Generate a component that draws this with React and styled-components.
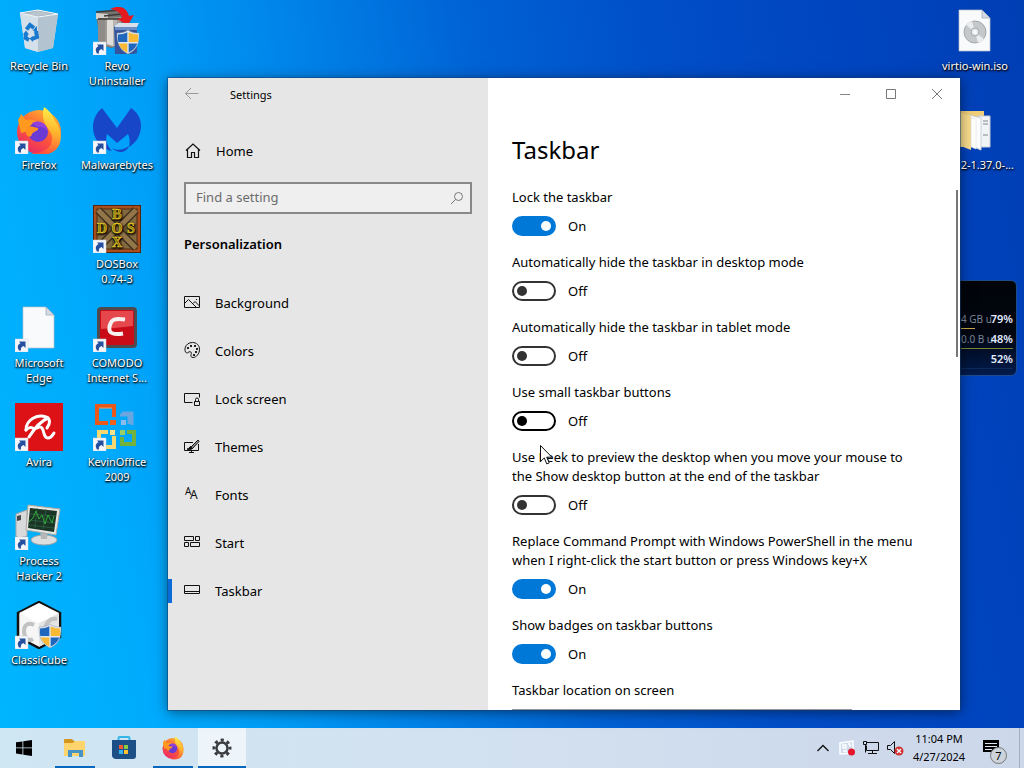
import React, { useState } from "react";
import styled, { createGlobalStyle } from "styled-components";

const NAV_ITEMS = [
  { name: "Background", icon: "background" },
  { name: "Colors", icon: "colors" },
  { name: "Lock screen", icon: "lock" },
  { name: "Themes", icon: "themes" },
  { name: "Fonts", icon: "fonts" },
  { name: "Start", icon: "start" },
  { name: "Taskbar", icon: "taskbar" },
];

const SETTINGS = [
  { id: "lock", label: "Lock the taskbar", on: true },
  { id: "hideDesktop", label: "Automatically hide the taskbar in desktop mode", on: false },
  { id: "hideTablet", label: "Automatically hide the taskbar in tablet mode", on: false },
  { id: "small", label: "Use small taskbar buttons", on: false, hovered: true },
  {
    id: "peek",
    label:
      "Use Peek to preview the desktop when you move your mouse to the Show desktop button at the end of the taskbar",
    on: false,
  },
  {
    id: "powershell",
    label:
      "Replace Command Prompt with Windows PowerShell in the menu when I right-click the start button or press Windows key+X",
    on: true,
  },
  { id: "badges", label: "Show badges on taskbar buttons", on: true },
];

/* ---------- desktop icons ---------- */

const Shortcut = () => (
  <g>
    <rect x="0" y="35" width="13" height="13" fill="#f4f6fa" stroke="#cfd8e4" strokeWidth="0.500" />
    <path d="M4 46.500c-2-3.500-1.500-6 1.500-7.300L4 37.500h6.500V44l-2-2c-2 .7-3 2-2.500 4.500z" fill="#24509f" />
  </g>
);

const Shield = () => (
  <g>
    <path d="M35 23c3 2.500 7 3 11 3 .5 10-2 17-11 21-8-4-11.500-11-11-21 4 0 8-.5 11-3z" fill="#dfe6ee" stroke="#8796a8" strokeWidth="0.500" />
    <path d="M34.300 25.300V35h-9c-.4-2.500-.4-4.700-.3-7.500 3.600 0 6.300-.5 9.300-2.200z" fill="#1f66bd" />
    <path d="M35.700 25.300V35h9c.4-2.500.4-4.700.3-7.500-3.600 0-6.300-.5-9.300-2.200z" fill="#f9b934" />
    <path d="M34.300 45.500v-9h-8.500c1.200 4 4 7 8.500 9z" fill="#f9b934" />
    <path d="M35.700 45.500v-9h8.500c-1.200 4-4 7-8.500 9z" fill="#1f66bd" />
  </g>
);

const RecycleBin = () => (
  <>
    <path d="M5 6l18-3 20 4-5 34-15 4-13-4z" fill="#c6d0d9" />
    <path d="M5 6l18 4 20-3-20-4z" fill="#95a3af" />
    <path d="M9 7l14 2 15-2-15-3z" fill="#b9c5cf" />
    <path d="M5 6l18 4v35l-13-4z" fill="#d3dfe9" />
    <path d="M23 10l20-3-5 34-15 4z" fill="#b4c3d0" />
    <path d="M5 6l18 4 20-3-20-4z" fill="none" stroke="#f2f6f9" strokeWidth="1.200" />
    <g fill="none" stroke="#1979cf" strokeWidth="4">
      <path d="M11.500 22.500l3.500-4.500 4 3" />
      <path d="M21 24l1 6-5 2" />
      <path d="M14 33l-3.500-2 .5-5" />
    </g>
    <path d="M17.500 23.500l4.500-4.500v5.500zM18 29v6l-3.500-3.500zM8 27.500l3-4 3 4z" fill="#1979cf" />
  </>
);

const Revo = () => (
  <>
    <path d="M3 6l18-3 10 2v33l-13 3-11-3z" fill="#777470" />
    <path d="M3 6l12 1v5H3z" fill="#d4d1cc" />
    <path d="M5 11h9v26l-9-3z" fill="#8f8c87" />
    <path d="M12 11l16-1v27l-9 3-7-2z" fill="#9d9a95" />
    <path d="M14 12h6v27l-6-2z" fill="#e0deda" />
    <path d="M20 12h4v27h-4z" fill="#b9b6b1" />
    <path d="M3 5l25-2M11 9l18-2M5 12h24" stroke="#3d3936" strokeWidth="1.300" />
    <path d="M17 2c10-5 17-1 19 7l5-1-6 10-11-6 5-1c-1-5-5-8-12-9z" fill="#e31a1f" />
    <path d="M21 19l4-3h21l-2 4v26l-4 1H22z" fill="#34559b" />
    <path d="M21 19l4-3h21l-2 4H22z" fill="#d6dfea" />
    <path d="M22 20h22v3H22z" fill="#6c8cc4" />
    <Shield />
    <Shortcut />
  </>
);

const FirefoxShapes = () => (
  <>
    <circle cx="24" cy="26" r="22" fill="url(#ffRed)" />
    <path d="M29 1c7 5 9 9 11 14 6 7 8 18 3 26-5 8-17 10-27 6 12 1 22-5 21-16-1-6-4-8-7-13-2-5-3-10-1-17z" fill="url(#ffGold)" />
    <path d="M3 14c1-2 2-3 3-6l5 6c4-1 9 0 11 2l-4 8-12 3z" fill="#ff9a1f" />
    <circle cx="23" cy="26" r="10" fill="#6b39d3" />
    <path d="M11 21c4-1 8 0 12 1 1 3-4 3-6 6-1 4-4 3-6 0z" fill="#ff9120" />
    <path d="M17 17c7-4 15 0 16 9-2-4-6-6-11-5z" fill="#9340dc" />
  </>
);

const FirefoxDesktop = () => (
  <>
    <FirefoxShapes />
    <Shortcut />
  </>
);

const Malwarebytes = () => (
  <>
    <path
      d="M9 2l15 20L38 2c6 4 10 10 10 18 0 9-5 17-12 21 1-5 1-9-1-13l-11 9-10-9c-2 6 0 12 5 17C8 43 0 33 0 21 0 13 4 6 9 2z"
      fill="#1746c8"
    />
    <path d="M19 42c5 3 12 2 17-2-2 6-10 9-17 2z" fill="#1746c8" />
    <Shortcut />
  </>
);

const DosBox = () => (
  <>
    <rect width="48" height="48" fill="#52260d" />
    <rect x="1" y="1" width="46" height="46" fill="#a94f1d" />
    <rect x="4" y="4" width="40" height="40" fill="#82693e" stroke="#4d2b12" />
    <path d="M24 5v38M5 24h38" stroke="#6d5530" strokeWidth="10" />
    <path d="M5 5l38 38M43 5L5 43" stroke="#40311f" strokeWidth="8" />
    <path d="M5 5l38 38M43 5L5 43" stroke="#927548" strokeWidth="5" />
    <g fill="#fbdc27" stroke="#fbdc27" strokeWidth="0.500" fontFamily="Liberation Serif, serif" fontWeight="700" fontSize="14" textAnchor="middle">
      <text x="24" y="14">B</text>
      <text x="9" y="28">D</text>
      <text x="24" y="28">O</text>
      <text x="38" y="28">S</text>
      <text x="24" y="42">X</text>
    </g>
    <Shortcut />
  </>
);

const Page = ({ shortcut }) => (
  <>
    <path d="M8 3h23l8 8v33H8z" fill="#f9fafb" stroke="#b9c2cc" strokeWidth="0.700" />
    <path d="M31 3v8h8z" fill="#d5dbe3" stroke="#9aa7b5" strokeWidth="0.700" />
    {shortcut && <Shortcut />}
  </>
);

const Comodo = () => (
  <>
    <rect x="4" y="3" width="40" height="41" rx="4" fill="#4e4a50" />
    <rect x="7" y="6" width="34" height="35" rx="2" fill="#c90b17" />
    <path d="M8 7h32v15q-16 2-32 3z" fill="#e5474d" />
    <path d="M32 15.500c-7-1-12-1-14 3-2 4-2 7-1 9 2 3 7 3 13 2" fill="none" stroke="#f7f0f0" strokeWidth="4" />
    <Shortcut />
  </>
);

const Avira = () => (
  <>
    <rect width="48" height="48" fill="#dc1216" />
    <g fill="none" stroke="#fff" strokeWidth="3" strokeLinecap="round" strokeLinejoin="round">
      <path d="M11 27C11 16 23 11 31 14c5 2 4 7 1 11" />
      <path d="M33 15C26 18 19 26 14 34" />
      <path d="M11 27c3-3 6-3 8-1M22 25c3-2 5-1 6 2 1 4 2 8 5 8s4-2 6-5" />
    </g>
    <Shortcut />
  </>
);

const Office = () => (
  <>
    <g fill="none">
      <path d="M15 20H4V3h17v11" stroke="#e8581b" strokeWidth="4" />
      <path d="M6 5h13" stroke="#f59b62" />
      <rect x="17" y="17" width="6" height="5" fill="#f0601f" />
      <path d="M27 12h9v9M29 10h10v12" stroke="#6aa6e0" strokeWidth="3" />
      <rect x="28" y="17" width="5" height="5" fill="#8abdec" />
      <path d="M6 35v-6h9M21 33v11H9" stroke="#f3d873" strokeWidth="4" />
      <rect x="17" y="27" width="5" height="5" fill="#f8e28b" />
      <path d="M34 29h7v12H29v-7" stroke="#73b13d" strokeWidth="4" />
      <rect x="27" y="27" width="5" height="5" fill="#9bcf63" />
    </g>
    <Shortcut />
  </>
);

const ProcessHacker = () => (
  <>
    <path d="M1 12l11-4v26l-8 2-3-2z" fill="#d9dadb" stroke="#a4a6a9" />
    <path d="M2 14l4-1v5l-4 1z" fill="#46494c" />
    <ellipse cx="29" cy="38" rx="13" ry="5" fill="#dddfdf" stroke="#9fa2a5" />
    <path d="M25 28h8l-1 9h-6z" fill="#b5b7b9" />
    <path d="M13 3l32 4-4 26-30-5z" fill="#e6e6e2" stroke="#a7a8a3" />
    <path d="M15 6l27 3-3 21-26-4z" fill="#1a3425" />
    <path d="M15 12l26 2M14 18l26 3M14 23l25 3M22 6l-2 20M31 7l-3 20" stroke="#356946" strokeWidth="0.700" />
    <path d="M14 20l4-4 3-7 3 8 3-4 3 9 3-9 4 8 2-7" fill="none" stroke="#2fa83a" />
    <Shortcut />
  </>
);

const ClassiCube = () => (
  <>
    <path d="M24 1l21 11v24L24 47 3 36V12z" fill="#f6f6f6" stroke="#111" strokeWidth="2.500" />
    <path d="M24 22v24l20-11V12z" fill="#e4e4e4" />
    <path d="M4 12l20 10 20-10L24 2z" fill="#fff" />
    <g fill="none" stroke="#c2c2c2" strokeWidth="4">
      <path d="M19 24c-6-3-10 0-10 6s4 11 9 8" />
      <path d="M42 18c-7-1-12 4-12 12" />
    </g>
    <Shield />
    <Shortcut />
  </>
);

const Iso = () => (
  <>
    <Page />
    <circle cx="24" cy="25" r="11" fill="#c5c8ca" stroke="#a4a8ab" />
    <path d="M24 25L15 18a11 11 0 0 1 6-4zM24 25l9 7a11 11 0 0 1-6 4z" fill="#e9ebec" />
    <circle cx="24" cy="25" r="4" fill="#e7e9ea" stroke="#a4a8ab" />
    <circle cx="24" cy="25" r="1.500" fill="#fff" />
  </>
);

const OpenFolder = () => (
  <>
    <path d="M2 5h31v36H2z" fill="#f0cd78" />
    <path d="M27 10h12v31H27z" fill="#f1f4f6" stroke="#c6cbd0" />
    <path d="M32 15h5M32 18h5M32 29h5" stroke="#7f8890" />
    <path d="M18 9l12 3v32l-12-5z" fill="#fcfdfd" stroke="#ccd2d8" />
    <path d="M2 5l18 5v34L2 37z" fill="#f8dc8c" />
    <path d="M20 12l5 1v30l-5-2z" fill="#fff" stroke="#d5d9dd" strokeWidth="0.500" />
  </>
);

/* slot is the row and column on the desktop grid */
const LEFT_ICONS = [
  { name: "Recycle Bin", Art: RecycleBin, slot: "1 / 1" },
  { name: "Revo\nUninstaller", Art: Revo, slot: "1 / 2" },
  { name: "Firefox", Art: FirefoxDesktop, slot: "2 / 1" },
  { name: "Malwarebytes", Art: Malwarebytes, slot: "2 / 2" },
  { name: "DOSBox\n0.74-3", Art: DosBox, slot: "3 / 2" },
  { name: "Microsoft\nEdge", Art: () => <Page shortcut />, slot: "4 / 1" },
  { name: "COMODO\nInternet S...", Art: Comodo, slot: "4 / 2" },
  { name: "Avira", Art: Avira, slot: "5 / 1" },
  { name: "KevinOffice\n2009", Art: Office, slot: "5 / 2" },
  { name: "Process\nHacker 2", Art: ProcessHacker, slot: "6 / 1" },
  { name: "ClassiCube", Art: ClassiCube, slot: "7 / 1" },
];

const RIGHT_ICONS = [
  { name: "virtio-win.iso", Art: Iso, slot: "1 / 1" },
  { name: "2-1.37.0-...", Art: OpenFolder, slot: "2 / 1", end: true },
];

/* ---------- settings icons ---------- */

const NAV_ART = {
  background: (
    <>
      <path d="M.5 1.500h15v11H.5z" />
      <path d="M.5 8.500l4-4 8 8M9 8.500l2-2 4.500 4.500" />
      <path d="M12 4.500h1" />
    </>
  ),
  colors: (
    <>
      <path d="M8.500-.5c4 0 7 2.800 7 6.800 0 4.600-3.400 8.200-6.400 8.200-2 0-2.600-1.400-2-3 .5-1.500.2-2.700-1-2.800-1.700-.2-2.200 1.800-3.600 1.200C-.5 8.500.5-.5 8.500-.5z" />
      <g fill="#222" stroke="none">
        <rect x="3" y="4" width="2" height="2" />
        <rect x="6" y="2" width="2" height="2" />
        <rect x="10" y="2" width="2" height="2" />
        <rect x="12" y="5" width="2" height="2" />
        <rect x="11" y="8" width="2" height="2" />
        <rect x="9" y="11" width="2" height="2" />
      </g>
    </>
  ),
  lock: (
    <>
      <path d="M8.500 11.500h-8v-9h15v4" />
      <path d="M10.500 10.500h5v4h-5zM11.500 10.500v-2q0-1.500 1.500-1.500t1.500 1.500v2" />
    </>
  ),
  themes: (
    <>
      <path d="M9 3.500H.5v8h14V5M7.500 11.500v2M5 13.500h5" />
      <path d="M14 1L8 7l-1 1.500L8.500 9.500l6.500-7z" fill="#999" />
      <path d="M7 7.500c-2 0-1.500 2.500-4 2.500 2 1 5 .8 5.500-1" fill="#111" />
    </>
  ),
  fonts: (
    <g fill="#111" stroke="none" fontFamily="Noto Sans, sans-serif">
      <text x="1" y="8" fontSize="10">A</text>
      <text x="6" y="12" fontSize="12">A</text>
    </g>
  ),
  start: <path d="M.5 1.500h9v4h-9zM11.500 1.500h4v4h-4zM.5 7.500h4v4h-4zM6.500 7.500h9v4h-9z" />,
  taskbar: <path d="M.5 2.500h15v8H.5zM.5 8.500h15" />,
};

const NavIcon = ({ name }) => (
  <svg width="16" height="16" viewBox="0 0 16 16" fill="none" stroke="#111" overflow="visible">
    {NAV_ART[name]}
  </svg>
);

/* ---------- parts ---------- */

const ToggleSetting = ({ setting }) => {
  const [on, setOn] = useState(setting.on);

  return (
    <StSetting>
      <StSettingLabel htmlFor={setting.id}>{setting.label}</StSettingLabel>
      <StToggleRow>
        <StToggle
          id={setting.id}
          type="checkbox"
          role="switch"
          checked={on}
          $hovered={setting.hovered}
          onChange={(event) => setOn(event.target.checked)}
        />
        <span>{on ? "On" : "Off"}</span>
      </StToggleRow>
    </StSetting>
  );
};

const DesktopIcons = ({ icons, columns }) => (
  <StIconGrid $columns={columns}>
    {icons.map(({ name, Art, slot, end }) => (
      <StDesktopIcon key={name} $slot={slot} $end={end}>
        <svg width="48" height="48" viewBox="0 0 48 48">
          <Art />
        </svg>
        <span>{name}</span>
      </StDesktopIcon>
    ))}
  </StIconGrid>
);

const SettingsWindow = () => {
  const [page, setPage] = useState("Taskbar");

  return (
    <StWindow>
      <StSidebar>
        <StTitleBar>
          <StBackButton aria-label="Back">
            <svg width="14" height="14" viewBox="0 0 14 14" fill="none" stroke="#999">
              <path d="M.5 6.500h13M6 1L.5 6.500 6 12" />
            </svg>
          </StBackButton>
          <span>Settings</span>
        </StTitleBar>
        <StHome>
          <svg width="16" height="16" viewBox="0 0 16 16" fill="none" stroke="#111" strokeWidth="1.200">
            <path d="M1 7.500L8 1l7 6.500M2.500 6.500v8h4v-5h3v5h4v-8" />
          </svg>
          Home
        </StHome>
        <StSearch>
          <input type="text" placeholder="Find a setting" aria-label="Find a setting" />
          <svg width="14" height="14" viewBox="0 0 14 14" fill="none" stroke="#777">
            <circle cx="8.500" cy="5.500" r="4" />
            <path d="M5.500 8.500L1 13" />
          </svg>
        </StSearch>
        <StGroupTitle>Personalization</StGroupTitle>
        <StNav>
          {NAV_ITEMS.map((item) => (
            <StNavItem key={item.name} $active={item.name === page} onClick={() => setPage(item.name)}>
              <NavIcon name={item.icon} />
              {item.name}
            </StNavItem>
          ))}
        </StNav>
      </StSidebar>

      <StMain>
        <StWindowButtons>
          <button aria-label="Minimize">
            <svg width="12" height="12" viewBox="0 0 12 12" stroke="#858585">
              <path d="M1 6.500h10" />
            </svg>
          </button>
          <button aria-label="Maximize">
            <svg width="12" height="12" viewBox="0 0 12 12" fill="none" stroke="#777">
              <path d="M1.500 1.500h9v9h-9z" />
            </svg>
          </button>
          <button aria-label="Close">
            <svg width="12" height="12" viewBox="0 0 12 12" stroke="#777">
              <path d="M1 1l10 10M11 1L1 11" />
            </svg>
          </button>
        </StWindowButtons>
        <StHeading>Taskbar</StHeading>
        <StScrollArea>
          <StSettingList>
            {SETTINGS.map((setting) => (
              <ToggleSetting key={setting.id} setting={setting} />
            ))}
            <StSetting>
              <StSettingLabel htmlFor="location">Taskbar location on screen</StSettingLabel>
              <StSelect id="location" defaultValue="Bottom">
                <option>Left</option>
                <option>Top</option>
                <option>Right</option>
                <option>Bottom</option>
              </StSelect>
            </StSetting>
          </StSettingList>
          <StScrollThumb />
        </StScrollArea>
      </StMain>
    </StWindow>
  );
};

const Taskbar = () => (
  <StTaskbar>
    <StTaskButtons>
      <StTaskButton aria-label="Start">
        <svg width="16" height="16" viewBox="0 0 16 16" fill="#000">
          <path d="M0 2.300l6.500-.9v6.100H0zM7.300 1.300L16 0v7.500H7.300zM0 8.300h6.500v6.200L0 13.600zM7.300 8.300H16V16l-8.700-1.300z" />
        </svg>
      </StTaskButton>
      <StTaskButton aria-label="File Explorer" $open>
        <svg width="22" height="20" viewBox="0 0 22 20">
          <path d="M0 2q0-1 1-1h7l2 2h9v14H0z" fill="#d3971f" />
          <path d="M0 5h9l2-2h9q1 0 1 1v14H0z" fill="#fdd56c" />
          <path d="M4 19v-7h15v7h-4v-4H8v4z" fill="#4693c8" />
        </svg>
      </StTaskButton>
      <StTaskButton aria-label="Microsoft Store">
        <svg width="24" height="24" viewBox="0 0 24 24">
          <path d="M6.500 5V2q0-1 1-1h9q1 0 1 1v3" fill="none" stroke="#35b6e8" strokeWidth="2" />
          <path d="M0 4h24v16q0 3-3 3H4q-3 0-4-3z" fill="#1b4f86" />
          <path d="M7 9h4v4H7z" fill="#f05a35" />
          <path d="M12 9h4v4h-4z" fill="#8ccb3f" />
          <path d="M7 14h4v4H7z" fill="#35b3ec" />
          <path d="M12 14h4v4h-4z" fill="#fcc132" />
        </svg>
      </StTaskButton>
      <StTaskButton aria-label="Firefox" $open>
        <svg width="24" height="24" viewBox="0 0 48 50">
          <FirefoxShapes />
        </svg>
      </StTaskButton>
      <StTaskButton aria-label="Settings" $open $active>
        <svg width="20" height="20" viewBox="0 0 20 20" fill="none" stroke="#3a3d40">
          <circle cx="10" cy="10" r="5.500" strokeWidth="2.500" />
          <circle cx="10" cy="10" r="8" strokeWidth="3" strokeDasharray="3.140 3.140" strokeDashoffset="1.570" />
        </svg>
      </StTaskButton>
    </StTaskButtons>

    <StTray>
      <StTrayButton aria-label="Show hidden icons">
        <svg width="14" height="14" viewBox="0 0 14 14" fill="none" stroke="#111" strokeWidth="1.300">
          <path d="M1.500 10L7 4.500l5.500 5.500" />
        </svg>
      </StTrayButton>
      <StTrayButton aria-label="Comodo">
        <svg width="18" height="18" viewBox="0 0 18 18" fill="none" stroke="#fff" strokeWidth="1.500">
          <path d="M2 4l13-2v12L2 15zM5 6h3v3H5zM10 5h2v3M5 12h4" />
          <circle cx="13.500" cy="13" r="3.500" fill="#e2152c" stroke="none" />
        </svg>
      </StTrayButton>
      <StTrayButton aria-label="Network">
        <svg width="18" height="18" viewBox="0 0 18 18" fill="none" stroke="#111">
          <path d="M5 3.500h11.500v8h-12v-5M10.500 11.500v3M6 14.500h9" />
          <path d="M1.500 2.500h3v3h-3zM3.500 6v7.500" />
        </svg>
      </StTrayButton>
      <StTrayButton aria-label="Volume muted">
        <svg width="18" height="18" viewBox="0 0 18 18" fill="none" stroke="#111">
          <path d="M1.500 6.500h3l4-4v12l-4-4h-3z" />
          <circle cx="13" cy="12" r="4.500" fill="#d23434" stroke="none" />
          <path d="M11 10l4 4M15 10l-4 4" stroke="#fff" strokeWidth="1.300" />
        </svg>
      </StTrayButton>
      <StClock>
        <span>11:04 PM</span>
        <span>4/27/2024</span>
      </StClock>
      <StNotifications aria-label="7 notifications">
        <svg width="17" height="17" viewBox="0 0 17 17">
          <path d="M0 0h16v12h-4v4l-4-4H0z" fill="#000" />
          <path d="M2 3.500h12M2 6.500h12M2 9.500h7" stroke="#dfe6f2" />
        </svg>
        <StBadge>7</StBadge>
      </StNotifications>
      <StShowDesktop aria-label="Show desktop" />
    </StTray>
  </StTaskbar>
);

const App = () => {
  return (
    <StScreen>
      <GlobalStyle />
      <StGradients aria-hidden="true">
        <linearGradient id="ffRed" x1="0.800" y1="0" x2="0.200" y2="1">
          <stop offset="0" stopColor="#ffbd2e" />
          <stop offset="0.500" stopColor="#ff5a36" />
          <stop offset="1" stopColor="#e8246b" />
        </linearGradient>
        <linearGradient id="ffGold" x1="0.600" y1="0" x2="0.400" y2="1">
          <stop offset="0" stopColor="#fff14a" />
          <stop offset="0.500" stopColor="#ffb02c" />
          <stop offset="1" stopColor="#ff4b3e" />
        </linearGradient>
      </StGradients>
      <StDesktop>
        <DesktopIcons icons={LEFT_ICONS} columns={2} />
        <DesktopIcons icons={RIGHT_ICONS} columns={1} />
        <StGadget>
          <StGadgetRow $line="#c9a54a" $used="14px">
            <span>4 GB u</span>
            <strong>79%</strong>
          </StGadgetRow>
          <StGadgetRow $line="#7c842c" $used="56px">
            <span>0.0 B u</span>
            <strong>48%</strong>
          </StGadgetRow>
          <StGadgetRow $line="#0b2a5a" $used="56px">
            <strong>52%</strong>
          </StGadgetRow>
        </StGadget>
        <SettingsWindow />
        <StCursor width="13" height="20" viewBox="0 0 13 20">
          <path d="M.5.500v16l3.800-3.600 2.400 6 2.500-1-2.500-5.700h5.200z" fill="#fff" stroke="#111" />
        </StCursor>
      </StDesktop>
      <Taskbar />
    </StScreen>
  );
};

export default App;

const GlobalStyle = createGlobalStyle`
  body {
    margin: 0;
    font-family: "Noto Sans", "Open Sans", sans-serif;
    font-size: 13px;
    color: #000;
  }
  button, input, select {
    font: inherit;
    color: inherit;
  }
  button {
    border: none;
    background: none;
    padding: 0;
  }
  svg {
    display: block;
    flex-shrink: 0;
  }
`;

const StScreen = styled.div`
  height: 100vh;
  display: flex;
  flex-direction: column;
  overflow: hidden;
  background: linear-gradient(80deg, #00b6ff 0%, #00aafc 14%, #009cf6 24%, #0082e8 37%, #0062d4 52%, #004ec8 68%, #0044be 86%, #003eb4 100%);
`;
const StGradients = styled.svg`
  position: absolute;
  width: 0;
  height: 0;
`;
const StDesktop = styled.div`
  position: relative;
  flex: 1;
  min-height: 0;
  display: flex;
  justify-content: space-between;
  padding-right: 10px;
`;
const StIconGrid = styled.div`
  display: grid;
  grid-template-columns: repeat(${(props) => props.$columns}, 78px);
  grid-auto-rows: 99px;
  align-content: start;
`;
const StDesktopIcon = styled.div`
  grid-area: ${(props) => props.$slot};
  display: flex;
  flex-direction: column;
  align-items: center;
  gap: 3px;
  padding-top: 7px;
  font-size: 11px;
  line-height: 15px;
  text-align: center;
  white-space: pre;
  color: #fff;
  text-shadow: 1px 1px 2px #000, 0 1px 2px #000;

  span {
    align-self: ${(props) => (props.$end ? "flex-end" : "center")};
  }
`;
const StGadget = styled.div`
  position: absolute;
  top: 280px;
  right: 7px;
  width: 160px;
  height: 96px;
  box-sizing: border-box;
  display: flex;
  flex-direction: column;
  justify-content: flex-end;
  padding: 0 3px 4px;
  border: 1px solid #1c4c8c;
  border-radius: 6px;
  background: linear-gradient(#010409, #01050f 55%, #021b4c);
`;
const StGadgetRow = styled.div`
  display: grid;
  grid-template-columns: 100px 1fr;
  height: 20px;
  font-size: 11px;
  line-height: 16px;
  white-space: nowrap;
  background-image: linear-gradient(${(props) => props.$line}, ${(props) => props.$line});
  background-repeat: no-repeat;
  background-position: 100px 17px;
  background-size: ${(props) => props.$used} 1px;

  span {
    grid-area: 1 / 2;
    font-size: 10px;
    color: #7b8797;
  }
  strong {
    grid-area: 1 / 2;
    font-weight: 600;
    text-align: right;
    color: #e3ebff;
  }
`;
const StWindow = styled.div`
  position: absolute;
  top: 78px;
  bottom: 18px;
  left: 168px;
  right: 64px;
  display: flex;
  background-color: #fff;
  box-shadow: 0 0 0 1px rgba(20, 60, 110, 0.5), 0 2px 12px rgba(0, 0, 0, 0.5);
`;
const StSidebar = styled.aside`
  width: 320px;
  flex-shrink: 0;
  display: flex;
  flex-direction: column;
  background-color: #e6e6e6;
`;
const StTitleBar = styled.header`
  height: 32px;
  display: flex;
  align-items: center;
  gap: 14px;
  font-size: 11px;
`;
const StBackButton = styled.button`
  width: 48px;
  height: 32px;
  display: grid;
  place-items: center;
`;
const StHome = styled.button`
  height: 48px;
  margin-top: 17px;
  padding-left: 17px;
  display: flex;
  align-items: center;
  gap: 15px;
`;
const StSearch = styled.div`
  height: 32px;
  box-sizing: border-box;
  margin: 7px 16px 0;
  padding: 0 6px 0 10px;
  display: flex;
  align-items: center;
  border: 2px solid #888;
  background-color: #efefef;

  input {
    flex: 1;
    min-width: 0;
    padding: 0 0 2px;
    border: none;
    outline: none;
    background: none;
  }
  input::placeholder {
    color: #6c6c6c;
  }
`;
const StGroupTitle = styled.h2`
  margin: 20px 16px 0;
  font-size: 13px;
  line-height: 20px;
  font-weight: 600;
`;
const StNav = styled.nav`
  display: flex;
  flex-direction: column;
  margin-top: 25px;
`;
const StNavItem = styled.button`
  height: 48px;
  padding-left: 12px;
  display: flex;
  align-items: center;
  text-align: left;

  &::before {
    content: "";
    width: 4px;
    height: 24px;
    margin-left: -12px;
    background-color: ${(props) => (props.$active ? "#0a6cd6" : "transparent")};
  }
  svg {
    margin: 0 15px 0 12px;
  }
`;
const StMain = styled.main`
  flex: 1;
  min-width: 0;
  display: flex;
  flex-direction: column;
`;
const StWindowButtons = styled.div`
  height: 32px;
  flex-shrink: 0;
  display: flex;
  justify-content: flex-end;

  button {
    width: 46px;
    display: grid;
    place-items: center;
  }
`;
const StHeading = styled.h1`
  margin: 20px 24px 0;
  font-size: 24px;
  line-height: 40px;
  font-weight: 400;
`;
const StScrollArea = styled.div`
  flex: 1;
  min-height: 0;
  display: flex;
  justify-content: space-between;
  margin-top: 18px;
  overflow: hidden;
`;
const StSettingList = styled.div`
  width: 408px;
  padding-left: 24px;
`;
const StScrollThumb = styled.div`
  width: 2px;
  height: 167px;
  margin: 2px 2px 0 0;
  background-color: #777;
`;
const StSetting = styled.div`
  display: flex;
  flex-direction: column;
  gap: 9px;
  margin-bottom: 17px;
`;
const StSettingLabel = styled.label`
  line-height: 19px;
`;
const StToggleRow = styled.div`
  display: flex;
  align-items: center;
  gap: 12px;
  height: 20px;
`;
const StToggle = styled.input`
  appearance: none;
  width: 44px;
  height: 20px;
  margin: 0;
  padding: 0 3px;
  display: flex;
  align-items: center;
  box-sizing: border-box;
  border: 2px solid ${(props) => (props.$hovered ? "#000" : "#333")};
  border-radius: 10px;

  &::before {
    content: "";
    width: 10px;
    height: 10px;
    border-radius: 50%;
    background-color: ${(props) => (props.$hovered ? "#000" : "#333")};
  }
  &:checked {
    justify-content: flex-end;
    border-color: #0078d7;
    background-color: #0078d7;
  }
  &:checked::before {
    background-color: #fff;
  }
`;
const StSelect = styled.select`
  width: 340px;
  height: 32px;
  padding-left: 8px;
  border: 2px solid #999;
  background-color: #fff;
`;
const StCursor = styled.svg`
  position: absolute;
  top: 445px;
  left: 540px;
`;
const StTaskbar = styled.footer`
  height: 40px;
  flex-shrink: 0;
  display: flex;
  justify-content: space-between;
  background: linear-gradient(90deg, #cfe6f3, #d3e2f0 40%, #ccd7ea);
`;
const StTaskButtons = styled.div`
  display: flex;
  gap: 1px;
`;
const StTaskButton = styled.button`
  width: 48px;
  display: grid;
  place-items: center;
  background-color: ${(props) => (props.$active ? "#eef5fa" : "transparent")};
  background-image: ${(props) => (props.$open ? "linear-gradient(#0868bd, #0868bd)" : "none")};
  background-repeat: no-repeat;
  background-position: bottom;
  background-size: ${(props) => (props.$active ? "100%" : "40px")} 2px;

  &:first-child {
    margin-right: 2px;
  }
`;
const StTray = styled.div`
  display: flex;
  align-items: center;
`;
const StTrayButton = styled.button`
  width: 24px;
  height: 40px;
  display: grid;
  place-items: center;
`;
const StClock = styled.div`
  width: 64px;
  display: flex;
  flex-direction: column;
  align-items: center;
  font-size: 11px;
  line-height: 18px;
`;
const StNotifications = styled.button`
  position: relative;
  width: 48px;
  height: 40px;
  padding-left: 12px;
  display: flex;
  align-items: center;
`;
const StBadge = styled.span`
  position: absolute;
  right: 12px;
  bottom: 4px;
  width: 15px;
  height: 15px;
  border: 1px solid #777;
  border-radius: 50%;
  background-color: #cdd3da;
  font-size: 11px;
  line-height: 15px;
  text-align: center;
`;
const StShowDesktop = styled.button`
  width: 5px;
  height: 40px;
  border-left: 1px solid #a5afc0;
`;
